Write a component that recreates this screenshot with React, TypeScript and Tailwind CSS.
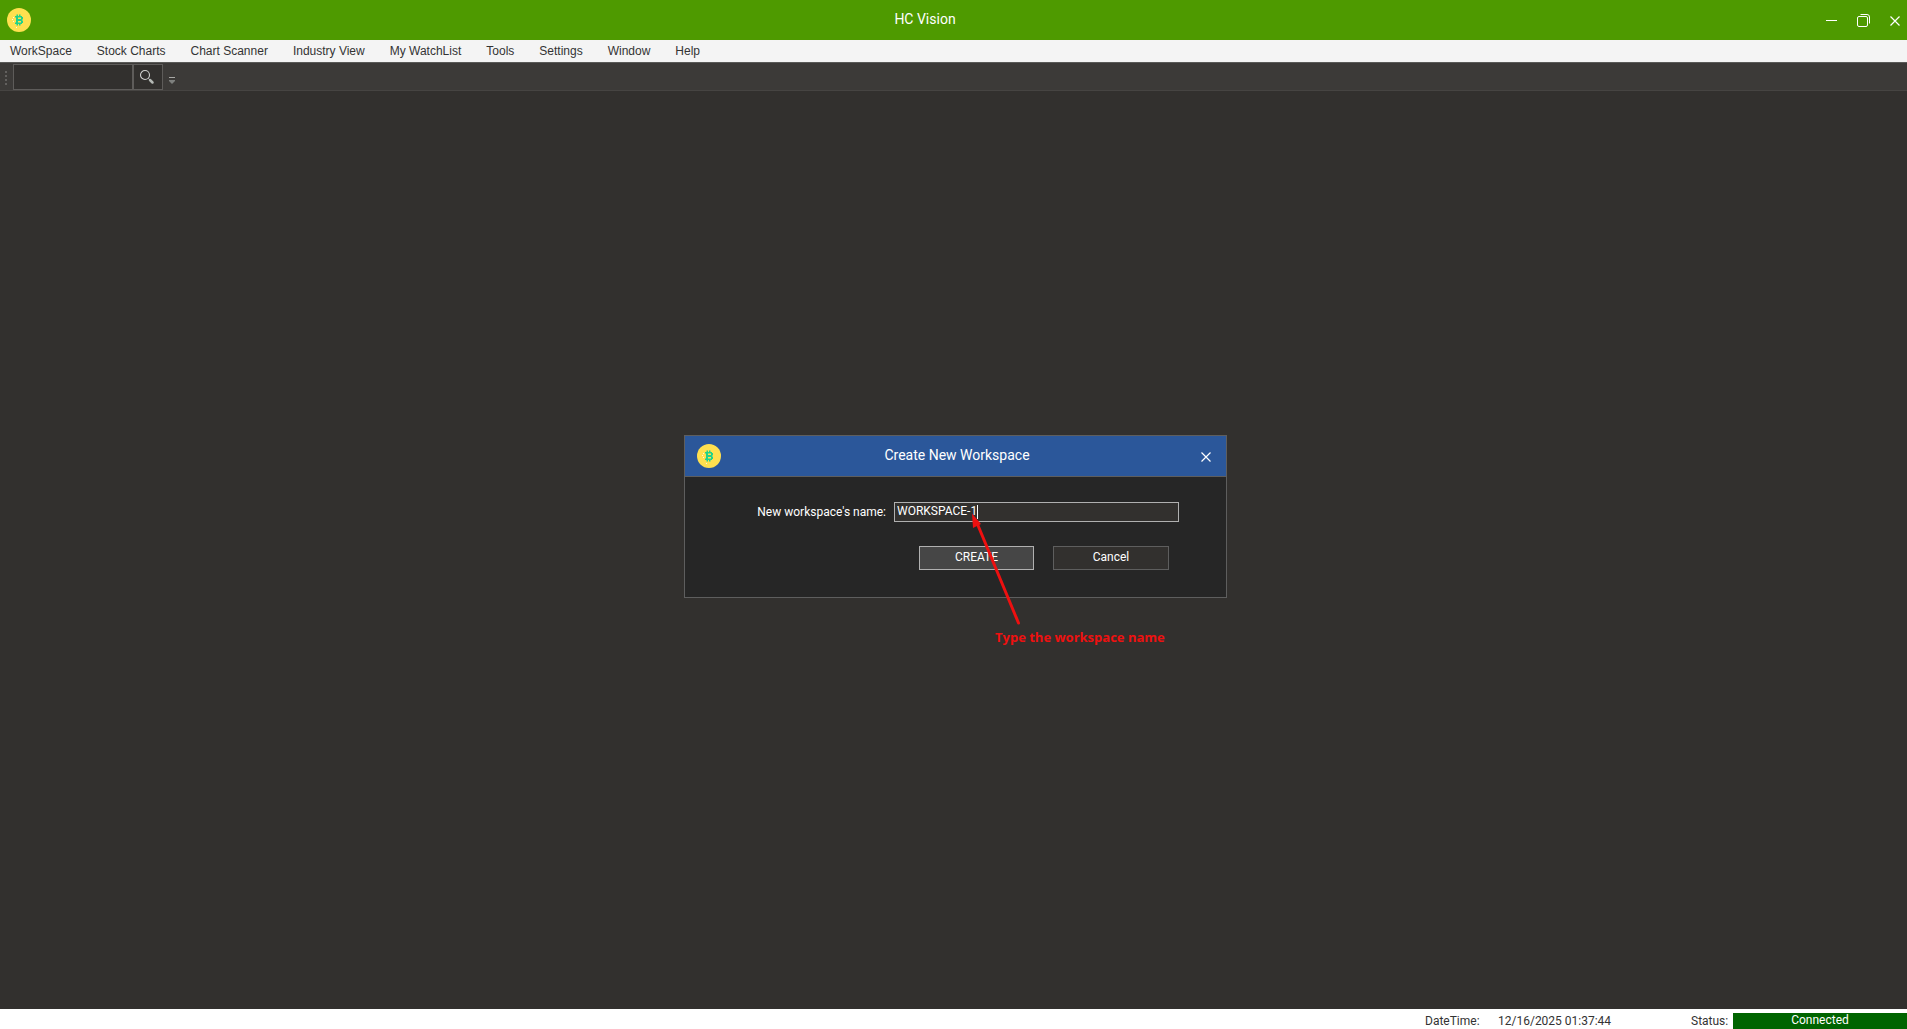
import React, { useState } from 'react';

const MENU_LIST: Array<string> = [
  'WorkSpace',
  'Stock Charts',
  'Chart Scanner',
  'Industry View',
  'My WatchList',
  'Tools',
  'Settings',
  'Window',
  'Help',
];

const CoinLogo = (): React.ReactElement => (
  <svg width="24" height="24" viewBox="0 0 24 24" className="shrink-0" aria-hidden="true">
    <circle cx="12" cy="12" r="12" fill="#ffe04f" />
    <path
      d="M8 8h1.500V6.500H11V8h1V6.500h1.500V8H15v1h1v2.500h-1v1h1V15h-1v1h-1.500v1.500H12V16h-1v1.500H9.500V16H8v-1.500h1v-5H8z"
      fill="#1fd28c"
    />
    <path d="M11 9.500h3v1.500h-3zM11 13h3v1.500h-3z" fill="#ffe04f" />
    <path d="M6 9h1v1H6zM5 11h1v1H5zM6 13h1v1H6zM9 19h1v1H9z" fill="#fff8d8" />
  </svg>
);

const CloseIcon = (): React.ReactElement => (
  <svg width="10" height="10" viewBox="0 0 10 10" stroke="#fff" strokeWidth="1.200" fill="none" aria-hidden="true">
    <path d="M.5.5l9 9M9.500.5l-9 9" />
  </svg>
);

const TitleBar = (): React.ReactElement => (
  <header className="flex h-10 shrink-0 items-center bg-[#4e9a00] pl-[7px] text-white">
    <CoinLogo />
    <h1 className="ml-1 flex-1 pb-[2px] text-center text-[14px] leading-5">HC Vision</h1>
    <button type="button" aria-label="Minimize" className="flex h-10 w-8 items-center justify-center">
      <svg width="11" height="11" viewBox="0 0 11 11" stroke="#fff" aria-hidden="true">
        <path d="M0 5.500h11" />
      </svg>
    </button>
    <button type="button" aria-label="Restore" className="flex h-10 w-8 items-center justify-center">
      <svg width="13" height="13" viewBox="0 0 13 13" stroke="#fff" fill="none" aria-hidden="true">
        <rect x=".5" y="2.500" width="10" height="10" rx="1.500" />
        <path d="M3.500.5H10a2.500 2.500 0 0 1 2.500 2.500v6.500" />
      </svg>
    </button>
    <button type="button" aria-label="Close" className="flex h-10 w-7 items-center justify-center pl-1 pt-px">
      <CloseIcon />
    </button>
  </header>
);

const MenuBar = (): React.ReactElement => (
  <nav className="flex h-[22px] shrink-0 items-center gap-[25px] bg-[#f4f4f4] pl-[10px] font-['Liberation_Sans',Arial,sans-serif] text-[12px] leading-4 text-[#333]">
    {MENU_LIST.map((menu) => (
      <button type="button" key={menu}>
        {menu}
      </button>
    ))}
  </nav>
);

const ToolBar = (): React.ReactElement => {
  const [symbol, setSymbol] = useState('');

  return (
    <div className="flex h-[29px] shrink-0 items-start border-y border-t-[#5a5a58] border-b-[#464442] bg-[#3c3a38] pt-px">
      <svg width="13" height="26" viewBox="0 0 13 26" fill="#62605e" aria-hidden="true">
        <path d="M5 7h2v2H5zM5 11h2v2H5zM5 15h2v2H5zM5 19h2v2H5z" />
      </svg>
      <input
        type="text"
        aria-label="Symbol"
        value={symbol}
        onChange={(e) => setSymbol(e.target.value)}
        className="h-[26px] w-[120px] border border-[#5e5c5a] bg-[#32302e] px-1 text-[12px] text-white"
      />
      <button type="button" aria-label="Search" className="h-[26px] w-[30px] border border-[#5e5c5a] bg-[#32302e] pl-[5px]">
        <svg width="16" height="16" viewBox="0 0 16 16" fill="none" aria-hidden="true">
          <circle cx="6" cy="6" r="4.500" stroke="#d0d0ce" strokeWidth="1.100" />
          <path d="M9.500 9.500l1.500 1.500" stroke="#d0d0ce" />
          <path d="M11 11l2.500 2.500" stroke="#b4b8b4" strokeWidth="2.500" strokeLinecap="round" />
        </svg>
      </button>
      <button type="button" aria-label="Toolbar options" className="flex h-[26px] w-[18px] items-end pb-[6px] pl-[6px]">
        <svg width="6" height="7" viewBox="0 0 6 7" aria-hidden="true">
          <path d="M0 0h6v1H0z" fill="#a8a8a6" />
          <path d="M0 3h6v1L3 7 0 4z" fill="#7e807e" />
        </svg>
      </button>
    </div>
  );
};

const StatusBar = (): React.ReactElement => (
  <footer className="flex h-5 shrink-0 items-end overflow-hidden bg-white text-[12px] leading-4 text-[#333]">
    <span className="ml-auto w-[73px]">DateTime:</span>
    <time className="w-[193px]">12/16/2025 01:37:44</time>
    <span className="w-[42px]">Status:</span>
    <span className="h-4 w-[174px] bg-[#006400] text-center leading-[14px] text-white">Connected</span>
  </footer>
);

const CreateWorkspaceDialog = (): React.ReactElement => {
  const [name, setName] = useState('WORKSPACE-1');

  return (
    <section
      role="dialog"
      aria-labelledby="dialogTitle"
      className="relative w-[543px] border border-[#5e5e5e] bg-[#262626] text-[12px] leading-4 text-white"
    >
      <div className="flex h-[41px] items-center border-b border-[#5e5e5e] bg-[#2b579a] pl-3">
        <CoinLogo />
        <h2 id="dialogTitle" className="ml-[7px] flex-1 pb-[2px] text-center text-[14px] leading-5">
          Create New Workspace
        </h2>
        <button type="button" aria-label="Close dialog" className="flex h-10 w-10 items-center justify-center pt-px">
          <CloseIcon />
        </button>
      </div>
      <form className="pt-[25px] pb-[27px]" onSubmit={(e) => e.preventDefault()}>
        <div className="flex items-center justify-end pr-[47px]">
          <label htmlFor="workspaceName" className="mr-2">
            New workspace&apos;s name:
          </label>
          <div className="relative">
            <input
              type="text"
              id="workspaceName"
              value={name}
              onChange={(e) => setName(e.target.value)}
              className="block h-5 w-[285px] border border-[#b0b0b0] bg-[#32302e] px-[2px] pb-[2px] text-[12px] leading-4"
            />
            <span className="absolute top-[3px] left-[83px] h-[14px] w-px bg-white" />
          </div>
        </div>
        <div className="mt-6 flex justify-end gap-[19px] pr-[57px]">
          <button type="submit" className="h-6 w-[115px] border border-[#b0b0b0] bg-[#464646] pb-[2px]">
            CREATE
          </button>
          <button type="button" className="h-6 w-[116px] border border-[#5e5e5e] bg-[#32302e] pb-[2px]">
            Cancel
          </button>
        </div>
      </form>
      <svg
        width="60"
        height="120"
        viewBox="0 0 60 120"
        className="pointer-events-none absolute top-[70px] left-[280px]"
        aria-hidden="true"
      >
        <path d="M12 17L53.500 117" stroke="#ee1010" strokeWidth="3" strokeLinecap="round" />
        <path d="M7 7.500L16 18 8 22z" fill="#ee1010" />
      </svg>
      <p className="absolute top-[191px] left-[310px] font-['Open_Sans','Noto_Sans',sans-serif] text-[13px] leading-5 font-bold whitespace-nowrap text-[#ee1010]">
        Type the workspace name
      </p>
    </section>
  );
};

const App = (): React.ReactElement => (
  <div className="relative flex h-screen flex-col overflow-hidden bg-[#32302e] font-[Roboto,'Open_Sans',sans-serif]">
    <TitleBar />
    <MenuBar />
    <ToolBar />
    <main className="flex-1" />
    <StatusBar />
    <div className="absolute inset-0 grid place-items-center pt-1 pl-1">
      <CreateWorkspaceDialog />
    </div>
  </div>
);

export default App;
